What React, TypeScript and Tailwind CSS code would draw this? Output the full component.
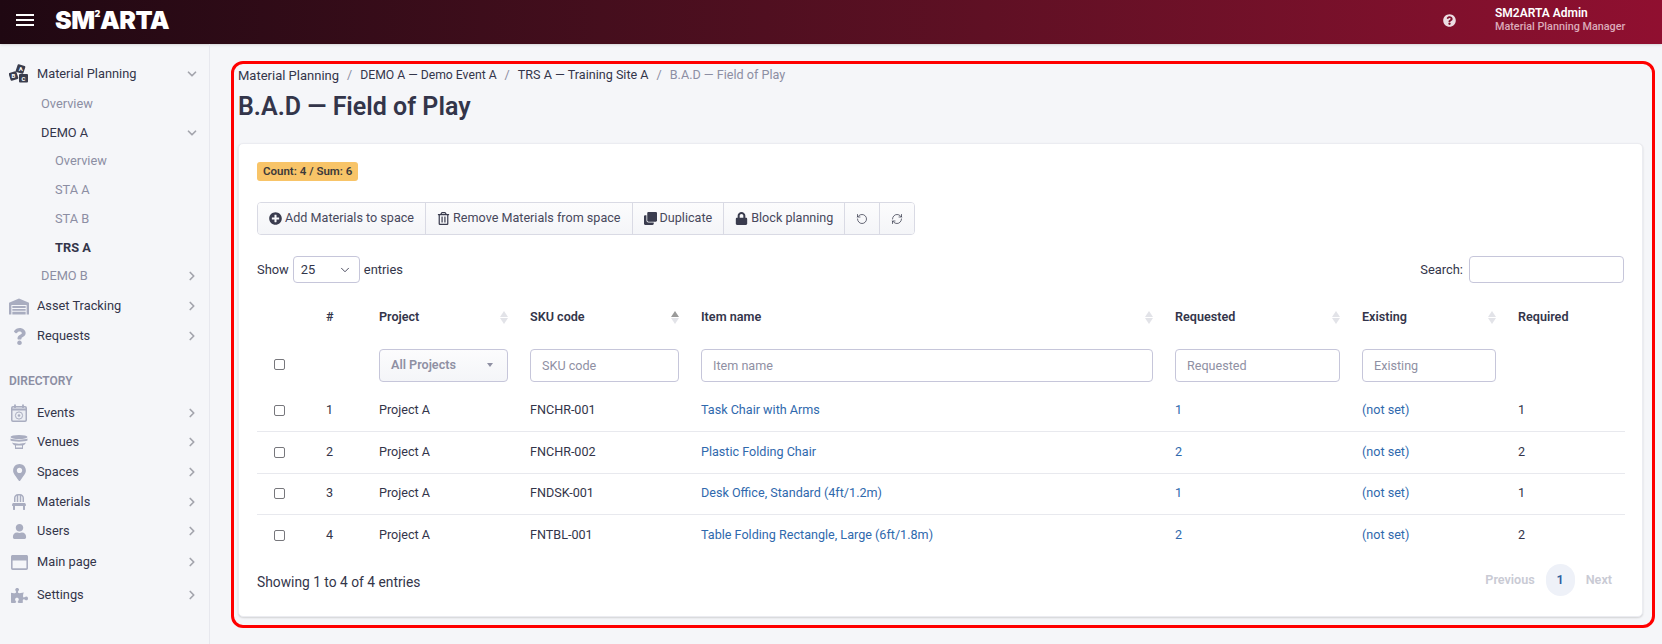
import { ChevronDown, ChevronRight, RefreshCw, RotateCcw } from 'lucide-react';
import {
  FaChair,
  FaLock,
  FaMapMarkerAlt,
  FaPlusCircle,
  FaPuzzlePiece,
  FaQuestion,
  FaQuestionCircle,
  FaRegTrashAlt,
  FaRegWindowMaximize,
  FaUser,
  FaClone,
} from 'react-icons/fa';

const FONT = { fontFamily: 'Roboto, "Noto Sans", sans-serif' };

function Blocks() {
  return (
    <svg width="20" height="20" viewBox="0 0 20 20" fontFamily="Roboto, sans-serif" fontWeight="700" fontSize="6" textAnchor="middle" fill="#fff">
      <rect x="7.5" y="1" width="8" height="8" rx="1" fill="#3a3d4d" transform="rotate(18 11.5 5)" />
      <rect x="0.5" y="8" width="8" height="8" rx="1" fill="#3a3d4d" transform="rotate(-18 4.5 12)" />
      <rect x="10" y="10" width="9" height="8.5" rx="1" fill="#3a3d4d" />
      <text x="11.8" y="7">A</text>
      <text x="4.5" y="14">B</text>
      <text x="14.5" y="16.5">C</text>
    </svg>
  );
}

function Warehouse() {
  return (
    <svg width="21" height="17" viewBox="0 0 21 17" fill="#a9adc0">
      <path d="M0 4.5 10.5 0 21 4.5V17h-2.5V7h-16v10H0Z" />
      <path d="M3.5 8h14v2h-14Zm0 3h14v2h-14Zm0 3h14v3h-14Z" />
    </svg>
  );
}

function Calendar() {
  return (
    <svg width="16" height="18" viewBox="0 0 16 18" fill="none" stroke="#a9adc0">
      <rect x="0.75" y="2.75" width="14.5" height="14.5" rx="1.2" strokeWidth="1.5" fill="#eceef4" />
      <path d="M0.75 5.5h14.5" strokeWidth="2" />
      <path d="M4 0.5v3.5M12 0.5v3.5" strokeWidth="1.8" />
      <circle cx="8" cy="11.5" r="3.6" strokeWidth="1" />
      <circle cx="8" cy="11.5" r="1.3" fill="#a9adc0" stroke="none" />
    </svg>
  );
}

function Stadium() {
  return (
    <svg width="18" height="14" viewBox="0 0 18 14" fill="#a9adc0">
      <ellipse cx="9" cy="2" rx="8.5" ry="2" />
      <path d="M0.5 3.5C3 5 15 5 17.5 3.5V5.5C15 7 3 7 0.5 5.5Z" />
      <path d="M2 7.5C5 9 13 9 16 7.5 15 10 13 10.5 12 10.5H6C5 10.5 3 10 2 7.5Z" />
      <rect x="5.5" y="9.5" width="7" height="3.5" fill="none" stroke="#a9adc0" strokeWidth="1" />
      <rect x="5" y="13" width="8" height="1" />
    </svg>
  );
}

const mainItems = [
  { label: 'Asset Tracking', icon: <Warehouse /> },
  { label: 'Requests', icon: <FaQuestion size={17} color="#a9adc0" /> },
];

const directoryItems = [
  { label: 'Events', icon: <Calendar />, h: 'h-[29px]' },
  { label: 'Venues', icon: <Stadium />, h: 'h-[30px]' },
  { label: 'Spaces', icon: <FaMapMarkerAlt size={17} color="#a9adc0" />, h: 'h-[30px]' },
  { label: 'Materials', icon: <FaChair size={16} color="#a9adc0" />, h: 'h-[30px]' },
  { label: 'Users', icon: <FaUser size={15} color="#a9adc0" />, h: 'h-[28px]' },
  { label: 'Main page', icon: <FaRegWindowMaximize size={17} color="#a9adc0" />, h: 'h-[34px]' },
  { label: 'Settings', icon: <FaPuzzlePiece size={17} color="#a9adc0" />, h: 'h-[32px]' },
];

const rows = [
  { n: 1, sku: 'FNCHR-001', name: 'Task Chair with Arms', qty: 1 },
  { n: 2, sku: 'FNCHR-002', name: 'Plastic Folding Chair', qty: 2 },
  { n: 3, sku: 'FNDSK-001', name: 'Desk Office, Standard (4ft/1.2m)', qty: 1 },
  { n: 4, sku: 'FNTBL-001', name: 'Table Folding Rectangle, Large (6ft/1.8m)', qty: 2 },
];

function SortIcon({ active }: { active?: boolean }) {
  return (
    <span className="flex flex-col gap-[1px]">
      <span className={`h-0 w-0 border-x-[4px] border-b-[6px] border-x-transparent ${active ? 'border-b-[#9a9a9a]' : 'border-b-[#e2e3e8]'}`} />
      <span className="h-0 w-0 border-x-[4px] border-t-[6px] border-x-transparent border-t-[#e2e3e8]" />
    </span>
  );
}

function Th({ label, active, noSort }: { label: string; active?: boolean; noSort?: boolean }) {
  return (
    <th className="px-[11px] pb-[12px] text-left font-semibold text-[#33354a]">
      <div className="flex items-center justify-between">
        <span>{label}</span>
        {!noSort && <SortIcon active={active} />}
      </div>
    </th>
  );
}

function FilterInput({ placeholder }: { placeholder: string }) {
  return (
    <input
      placeholder={placeholder}
      className="h-[33px] w-full rounded-[4px] border border-[#c6c6da] bg-white px-[11px] text-[12.6px] placeholder:text-[#8f90a3]"
    />
  );
}

function Check() {
  return <span className="block h-[11px] w-[11px] rounded-[2px] border border-[#77777c] bg-white" />;
}

function ToolButton({ children, last }: { children: React.ReactNode; last?: boolean }) {
  return (
    <button className={`flex h-full items-center gap-[3px] bg-gradient-to-b from-[#fcfcfd] to-[#f4f5f8] px-[11px] text-[12.6px] text-[#47485c] ${last ? '' : 'border-r border-[#d9dae4]'}`}>
      {children}
    </button>
  );
}

export default function App() {
  return (
    <div className="relative flex h-[644px] w-[1662px] flex-col overflow-hidden bg-[#f5f6f9] text-[12.8px] text-[#33354a]" style={FONT}>
      <header className="flex h-[44px] shrink-0 items-center bg-gradient-to-r from-[#1f0812] to-[#900f30] pb-[4px] shadow-sm">
        <div className="ml-[16px] flex w-[18px] flex-col gap-[3px]">
          <span className="h-[2px] bg-white" />
          <span className="h-[2px] bg-white" />
          <span className="h-[2px] bg-white" />
        </div>
        <div className="ml-[21px] flex items-start text-[25px] font-black leading-none tracking-[-0.5px] text-white" style={{ fontFamily: 'Inter, sans-serif' }}>
          SM<span className="mt-[1px] text-[9px] leading-none">2</span>ARTA
        </div>
        <FaQuestionCircle className="ml-auto" size={13} color="#ecdde2" />
        <div className="ml-[39px] mr-[37px] w-[130px] whitespace-nowrap leading-[14px]">
          <div className="text-[12px] font-semibold text-white">SM2ARTA Admin</div>
          <div className="text-[10.8px] font-medium text-[#dcaab9]">Material Planning Manager</div>
        </div>
      </header>

      <div className="flex min-h-0 flex-1">
        <aside className="w-[210px] shrink-0 border-r border-[#e7e8ee] pl-[9px] pr-[10px] pt-[15px]">
          <div className="flex h-[30px] items-center justify-between">
            <span className="flex items-center gap-[8px]"><span className="flex w-[20px] justify-center"><Blocks /></span>Material Planning</span>
            <ChevronDown size={14} strokeWidth={3} color="#a4a5ad" />
          </div>
          <div className="flex h-[30px] items-center pl-[32px] text-[#8c8ea3]">Overview</div>
          <div className="flex h-[27px] items-center justify-between pl-[32px]">DEMO A<ChevronDown size={14} strokeWidth={3} color="#a4a5ad" /></div>
          <div className="flex h-[29px] items-center pl-[46px] text-[#8c8ea3]">Overview</div>
          <div className="flex h-[29px] items-center pl-[46px] text-[#8c8ea3]">STA A</div>
          <div className="flex h-[30px] items-center pl-[46px] text-[#8c8ea3]">STA B</div>
          <div className="flex h-[27px] items-center pl-[46px] font-bold">TRS A</div>
          <div className="flex h-[30px] items-center justify-between pl-[32px] text-[#8c8ea3]">DEMO B<ChevronRight size={14} strokeWidth={3} color="#a4a5ad" /></div>
          {mainItems.map((item) => (
            <div key={item.label} className="flex h-[30px] items-center justify-between">
              <span className="flex items-center gap-[8px]"><span className="flex w-[20px] justify-center">{item.icon}</span>{item.label}</span>
              <ChevronRight size={14} strokeWidth={3} color="#a4a5ad" />
            </div>
          ))}
          <div className="mb-[7px] mt-[20px] flex h-[20px] items-center text-[12px] font-semibold text-[#8c8ea3]">DIRECTORY</div>
          {directoryItems.map((item) => (
            <div key={item.label} className={`flex items-center justify-between ${item.h}`}>
              <span className="flex items-center gap-[8px]"><span className="flex w-[20px] justify-center">{item.icon}</span>{item.label}</span>
              <ChevronRight size={14} strokeWidth={3} color="#a4a5ad" />
            </div>
          ))}
        </aside>

        <main className="min-w-0 flex-1 pl-[28px] pr-[19px] pt-[23px]">
          <nav className="flex h-[16px] items-center gap-[8px] text-[12.6px] leading-none">
            <span className="text-[13px]">Material Planning</span><span className="text-[#8c8ea3]">/</span>
            <span className="text-[12.2px]">DEMO A — Demo Event A</span><span className="text-[#8c8ea3]">/</span>
            <span>TRS A — Training Site A</span><span className="text-[#8c8ea3]">/</span>
            <span className="text-[#8c8ea3]">B.A.D — Field of Play</span>
          </nav>
          <h1 className="mt-[9px] text-[25px] font-semibold leading-[30px] text-[#33354a]">B.A.D — Field of Play</h1>

          <section className="mt-[21px] h-[474px] rounded-[5px] border border-[#ebecf1] bg-white px-[18px] pt-[18px] text-[12.6px] shadow-[0_1px_2px_rgba(0,0,0,0.15)]">
            <span className="inline-flex h-[19px] items-center rounded-[3px] bg-[#f8c468] px-[6px] text-[11.5px] font-semibold text-[#3d3a3a]">Count: 4 / Sum: 6</span>

            <div className="mt-[21px] flex h-[33px] w-fit overflow-hidden rounded-[4px] border border-[#d9dae4]">
              <ToolButton><FaPlusCircle size={13} color="#3a3c4e" />Add Materials to space</ToolButton>
              <ToolButton><FaRegTrashAlt size={13} color="#3a3c4e" />Remove Materials from space</ToolButton>
              <ToolButton><FaClone size={13} color="#3a3c4e" />Duplicate</ToolButton>
              <ToolButton><FaLock size={13} color="#3a3c4e" />Block planning</ToolButton>
              <ToolButton><RotateCcw size={12} strokeWidth={1.5} color="#3a3c4e" /></ToolButton>
              <ToolButton last><RefreshCw size={12} strokeWidth={1.5} color="#3a3c4e" /></ToolButton>
            </div>

            <div className="mt-[21px] flex h-[27px] items-center justify-between text-[12.9px]">
              <div className="flex items-center gap-[4px]">
                Show
                <span className="flex h-[27px] w-[67px] items-center justify-between rounded-[4px] border border-[#c6c6da] px-[7px]">
                  25 <ChevronDown size={14} strokeWidth={1.5} />
                </span>
                entries
              </div>
              <div className="flex items-center gap-[6px]">
                Search:
                <input className="h-[27px] w-[155px] rounded-[4px] border border-[#c6c6da]" />
              </div>
            </div>

            <table className="mt-[23px] w-[1368px] table-fixed border-collapse">
              <colgroup>
                <col className="w-[58px]" />
                <col className="w-[53px]" />
                <col className="w-[151px]" />
                <col className="w-[171px]" />
                <col className="w-[474px]" />
                <col className="w-[187px]" />
                <col className="w-[156px]" />
                <col className="w-[118px]" />
              </colgroup>
              <thead>
                <tr className="h-[34px]">
                  <th />
                  <Th label="#" noSort />
                  <Th label="Project" />
                  <Th label="SKU code" active />
                  <Th label="Item name" />
                  <Th label="Requested" />
                  <Th label="Existing" />
                  <Th label="Required" noSort />
                </tr>
                <tr className="h-[50px]">
                  <td className="pb-[2px] pl-[17px]"><Check /></td>
                  <td />
                  <td className="px-[11px]">
                    <div className="flex h-[33px] items-center justify-between rounded-[4px] border border-[#c6c6da] bg-gradient-to-b from-[#fcfcfd] to-[#f4f5f8] pl-[11px] pr-[14px] font-semibold text-[#8f90a3]">
                      All Projects
                      <span className="h-0 w-0 border-x-[3px] border-t-[4px] border-x-transparent border-t-[#8f90a3]" />
                    </div>
                  </td>
                  <td className="px-[11px]"><FilterInput placeholder="SKU code" /></td>
                  <td className="px-[11px]"><FilterInput placeholder="Item name" /></td>
                  <td className="px-[11px]"><FilterInput placeholder="Requested" /></td>
                  <td className="px-[11px]"><FilterInput placeholder="Existing" /></td>
                  <td />
                </tr>
              </thead>
              <tbody>
                {rows.map((row, i) => (
                  <tr key={row.n} className={`h-[41.5px] ${i < rows.length - 1 ? 'border-b border-[#e8e9ee]' : ''}`}>
                    <td className="pl-[17px]"><Check /></td>
                    <td className="px-[11px]">{row.n}</td>
                    <td className="px-[11px]">Project A</td>
                    <td className="px-[11px]">{row.sku}</td>
                    <td className="px-[11px] text-[#2f69ad]">{row.name}</td>
                    <td className="px-[11px] text-[#2f69ad]">{row.qty}</td>
                    <td className="px-[11px] text-[#2f69ad]">(not set)</td>
                    <td className="px-[11px]">{row.qty}</td>
                  </tr>
                ))}
              </tbody>
            </table>

            <div className="mt-[8px] flex items-center justify-between">
              <span className="mt-[4px] text-[13.8px]">Showing 1 to 4 of 4 entries</span>
              <div className="flex items-center font-semibold text-[#c9cad4]">
                <span className="mr-[11px]">Previous</span>
                <span className="flex h-[32px] w-[29px] items-center justify-center rounded-full bg-[#eef1f8] text-[#2f5f9e]">1</span>
                <span className="ml-[11px] mr-[12px]">Next</span>
              </div>
            </div>
          </section>
        </main>
      </div>

      <div className="pointer-events-none absolute left-[231px] top-[61px] h-[567px] w-[1424px] rounded-[12px] border-[3px] border-[#ff0000]" />
    </div>
  );
}
